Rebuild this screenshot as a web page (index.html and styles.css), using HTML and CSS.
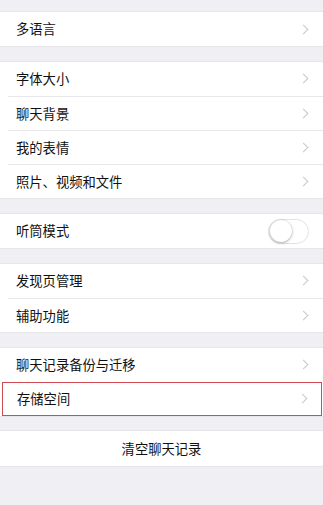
FILE: index.html
```html
<!DOCTYPE html>
<html lang="zh-CN">
<head>
<meta charset="utf-8">
<link rel="stylesheet" href="styles.css">
</head>
<body>
<div class="page">
  <div class="group g-first">
    <div class="row"><span class="label">多语言</span><span class="chev"></span></div>
  </div>
  <div class="group">
    <div class="row"><span class="label">字体大小</span><span class="chev"></span></div>
    <div class="row"><span class="label">聊天背景</span><span class="chev"></span></div>
    <div class="row"><span class="label">我的表情</span><span class="chev"></span></div>
    <div class="row"><span class="label">照片、视频和文件</span><span class="chev"></span></div>
  </div>
  <div class="group">
    <div class="row"><span class="label">听筒模式</span><span class="toggle"><span class="knob"></span></span></div>
  </div>
  <div class="group">
    <div class="row"><span class="label">发现页管理</span><span class="chev"></span></div>
    <div class="row"><span class="label">辅助功能</span><span class="chev"></span></div>
  </div>
  <div class="group">
    <div class="row"><span class="label">聊天记录备份与迁移</span><span class="chev"></span></div>
    <div class="row row-hl"><span class="label">存储空间</span><span class="chev"></span></div>
  </div>
  <div class="group">
    <div class="row row-center"><span class="label">清空聊天记录</span></div>
  </div>
</div>
</body>
</html>
```
FILE: styles.css
```css
html, body {
  margin: 0;
  padding: 0;
  background: #efeff4;
}
body {
  font-family: "Noto Sans CJK SC", "Noto Sans", sans-serif;
  font-size: 13.3px;
  color: #111;
  height: 505px;
  overflow: hidden;
}
.page {
  display: flex;
  flex-direction: column;
}
.group {
  background: #fff;
  margin-top: 15.5px;
  box-shadow: 0 -1px 0 #e6e6ea, 0 1px 0 #e6e6ea;
}
.g-first {
  margin-top: 12px;
}
.row {
  display: flex;
  align-items: center;
  justify-content: space-between;
  height: 34.2px;
  box-sizing: border-box;
  margin-left: 8px;
  padding-left: 8px;
  padding-right: 15px;
}
.row + .row {
  border-top: 1px solid #e8e8ec;
}
.label {
  line-height: 1;
  opacity: 0.999;
}
.chev {
  width: 6px;
  height: 6px;
  border-right: 1.3px solid #c8c8cc;
  border-top: 1.3px solid #c8c8cc;
  transform: rotate(45deg);
  margin-right: 1px;
}
.row-hl {
  padding-left: 14px;
  padding-right: 14px;
  border: 1px solid #cf4a52;
  margin: 0 1px 0 2px;
}
.row + .row-hl {
  border-top: 1px solid #cf4a52;
}
.row-center {
  justify-content: center;
  margin-left: 0;
  padding: 0;
}
.toggle {
  width: 39px;
  height: 23px;
  border: 1px solid #e2e2e6;
  border-radius: 13px;
  background: #fff;
  display: flex;
  align-items: center;
  margin-right: -1px;
}
.knob {
  width: 22px;
  height: 22px;
  border-radius: 50%;
  background: #fff;
  box-shadow: 0 1px 3px rgba(0,0,0,0.3), 0 0 0 0.5px rgba(0,0,0,0.08);
  margin-left: 0.5px;
}
```
